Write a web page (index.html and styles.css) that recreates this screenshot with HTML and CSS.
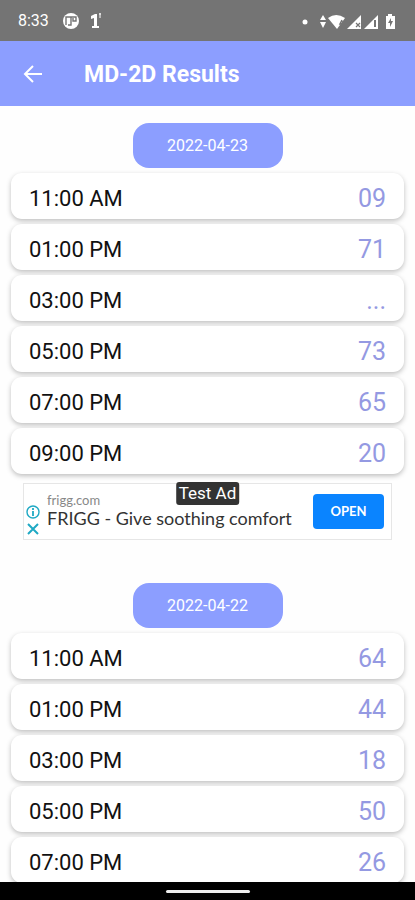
FILE: index.html
```html
<!DOCTYPE html>
<html lang="en">
<head>
    <meta charset="UTF-8">
    <meta name="viewport" content="width=device-width, initial-scale=1.0">
    <title>MD-2D Results</title>
    <link rel="stylesheet" href="styles.css">
</head>
<body>
    <div class="status-bar">
        <span class="clock">8:33</span>
        <svg class="status-app" width="18" height="18" viewBox="0 0 18 18">
            <circle cx="9" cy="9" r="8" fill="#fff"/>
            <path d="M4 13V5h10v4h-3V6M9 5v8H6" fill="none" stroke="#747474" stroke-width="1.4"/>
        </svg>
        <svg class="status-one" width="12" height="18" viewBox="0 0 12 18">
            <path d="M1 4l4-2h2v12h2v2H2v-2h2V6L1 7z" fill="#fff"/>
            <path d="M10 1v5M9 2h2" stroke="#fff" fill="none"/>
        </svg>
        <svg class="status-icons" width="98" height="20" viewBox="0 0 98 20">
            <g fill="#fff">
                <circle cx="4" cy="11" r="2.5"/>
                <path d="M22 4l3 5h-6zM22 17l-3-6h6z"/>
                <path d="M27 7q8-6 17 0l-8 11z"/>
                <path d="M60 4v14H46z"/>
                <path d="M77 4v14H63z"/>
                <path d="M87 3h4v2h3v13H85V5h2z"/>
            </g>
            <path d="M41 9l-2 4h4M42 10v6" stroke="#747474" stroke-width="1.5" fill="none"/>
            <path d="M55 12l4 4M59 12l-4 4" stroke="#747474" stroke-width="1.2" fill="none"/>
            <path d="M73 9h2v7h-2z" fill="#747474"/>
            <path d="M90 7l-3 5h2v4l3-6h-2z" fill="#747474"/>
        </svg>
    </div>

    <header class="app-bar">
        <button type="button" class="back" aria-label="Back">
            <svg width="20" height="20" viewBox="0 0 20 20">
                <path d="M19 9H2M10 1L2 9l8 8" fill="none" stroke="#fff" stroke-width="2"/>
            </svg>
        </button>
        <h1>MD-2D Results</h1>
    </header>

    <main class="results">
        <section class="day">
            <h2 class="date">2022-04-23</h2>
            <ul class="draws">
                <li class="draw"><span>11:00 AM</span><span class="number">09</span></li>
                <li class="draw"><span>01:00 PM</span><span class="number">71</span></li>
                <li class="draw"><span>03:00 PM</span><span class="number">...</span></li>
                <li class="draw"><span>05:00 PM</span><span class="number">73</span></li>
                <li class="draw"><span>07:00 PM</span><span class="number">65</span></li>
                <li class="draw"><span>09:00 PM</span><span class="number">20</span></li>
            </ul>
        </section>

        <aside class="ad">
            <span class="test-label">Test Ad</span>
            <div class="ad-icons">
                <svg width="14" height="14" viewBox="0 0 14 14">
                    <circle cx="7" cy="7" r="6" fill="none" stroke="#1fa9c4" stroke-width="1.4"/>
                    <path d="M7 3v2M7 6v5" stroke="#1fa9c4" stroke-width="1.8"/>
                </svg>
                <svg width="14" height="14" viewBox="0 0 14 14">
                    <path d="M2 2l10 10M12 2L2 12" stroke="#1fa9c4" stroke-width="2"/>
                </svg>
            </div>
            <div class="ad-text">
                <span class="ad-site">frigg.com</span>
                <span class="ad-title">FRIGG - Give soothing comfort</span>
            </div>
            <button type="button" class="open">OPEN</button>
        </aside>

        <section class="day">
            <h2 class="date">2022-04-22</h2>
            <ul class="draws">
                <li class="draw"><span>11:00 AM</span><span class="number">64</span></li>
                <li class="draw"><span>01:00 PM</span><span class="number">44</span></li>
                <li class="draw"><span>03:00 PM</span><span class="number">18</span></li>
                <li class="draw"><span>05:00 PM</span><span class="number">50</span></li>
                <li class="draw"><span>07:00 PM</span><span class="number">26</span></li>
            </ul>
        </section>
    </main>

    <div class="nav-bar"><span class="handle"></span></div>
</body>
</html>
```
FILE: styles.css
```css
* {
    box-sizing: border-box;
}
body {
    display: flex;
    flex-direction: column;
    height: 100vh;
    margin: 0;
    background-color: #fefefe;
    font-family: Roboto, sans-serif;
    color: #111;
}
svg {
    display: block;
}
.status-bar {
    display: flex;
    flex: none;
    align-items: center;
    height: 41px;
    padding: 0 16px 0 18px;
    background-color: #747474;
    color: #fff;
}
.clock {
    font-size: 16px;
}
.status-app {
    margin-left: 13px;
}
.status-one {
    margin-left: 10px;
}
.status-icons {
    margin-left: auto;
}
.app-bar {
    display: flex;
    flex: none;
    align-items: center;
    gap: 41px;
    height: 65px;
    padding: 2px 23px 0;
    background-color: #8c9eff;
    color: #fff;
}
.back {
    padding: 0;
    border: none;
    background: none;
    cursor: pointer;
}
.app-bar h1 {
    margin: 0;
    font-size: 23px;
    font-weight: 700;
}
.results {
    flex: 1;
    min-height: 0;
    padding: 17px 11px 0;
    overflow: hidden;
}
.date {
    width: 150px;
    margin: 0 auto 5px;
    border-radius: 16px;
    background-color: #8c9eff;
    color: #fff;
    font-size: 16px;
    font-weight: 400;
    line-height: 45px;
    text-align: center;
}
.draws {
    display: flex;
    flex-direction: column;
    gap: 5px;
    margin: 0;
    padding: 0;
    list-style: none;
}
.draw {
    display: flex;
    align-items: center;
    justify-content: space-between;
    height: 46px;
    padding: 4px 18px 0;
    border-radius: 11px;
    background-color: #fff;
    box-shadow: 0 2px 5px rgba(0, 0, 0, 0.25);
    font-size: 22px;
}
.number {
    color: #9499e2;
    font-size: 25px;
}
.ad {
    position: relative;
    display: flex;
    align-items: center;
    height: 57px;
    margin: 9px 12px 43px;
    padding: 0 7px 0 2px;
    border: 1px solid #e6e6e6;
    background-color: #fff;
}
/* sits over the top edge of the banner */
.test-label {
    position: absolute;
    top: -2px;
    left: 50%;
    padding: 0 3px;
    border-radius: 3px;
    background-color: #333;
    color: #fff;
    font-size: 17px;
    line-height: 23px;
    white-space: nowrap;
    transform: translateX(-50%);
}
.ad-icons {
    display: flex;
    flex-direction: column;
    gap: 3px;
    padding-top: 18px;
}
.ad-text {
    display: flex;
    flex: 1;
    flex-direction: column;
    padding: 0 0 4px 7px;
    font-family: Lato, sans-serif;
    white-space: nowrap;
}
.ad-site {
    color: #888;
    font-size: 13px;
    line-height: 16px;
}
.ad-title {
    color: #333;
    font-size: 18px;
    line-height: 20px;
}
.open {
    width: 71px;
    height: 35px;
    padding: 0 0 2px;
    border: none;
    border-radius: 4px;
    background-color: #0a84ff;
    color: #fff;
    font-family: Lato, sans-serif;
    font-size: 13px;
    font-weight: 700;
    cursor: pointer;
}
.nav-bar {
    display: flex;
    flex: none;
    align-items: center;
    justify-content: center;
    height: 18px;
    background-color: #000;
}
.handle {
    width: 84px;
    height: 3px;
    border-radius: 2px;
    background-color: #eee;
}
```
